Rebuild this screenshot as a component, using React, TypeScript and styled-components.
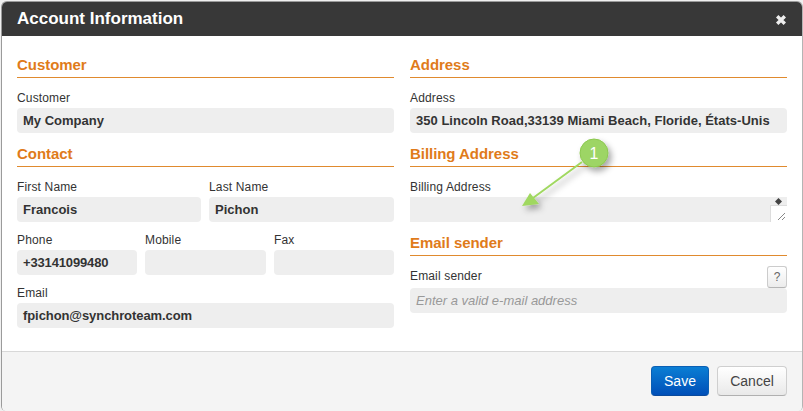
import React from 'react';
import styled, { createGlobalStyle } from 'styled-components';

const GlobalStyle = createGlobalStyle`
  html, body {
    margin: 0;
    padding: 0;
    background: #f0f0f0;
    overflow: hidden;
  }
  body {
    font-family: "Liberation Sans", Arial, sans-serif;
  }
`;

const Page = styled.div`
  position: relative;
  width: 803px;
  height: 411px;
  padding: 1px 0 0 1px;
  box-sizing: border-box;
`;

const Modal = styled.div`
  width: 802px;
  height: 410px;
  box-sizing: border-box;
  display: flex;
  flex-direction: column;
  background: #fff;
  border: 1px solid #9b9b9b;
  border-right-color: #b4b4b4;
  border-bottom: none;
  border-radius: 6px 6px 5px 5px;
  overflow: hidden;
`;

const Header = styled.div`
  height: 34px;
  flex: none;
  display: flex;
  align-items: center;
  justify-content: space-between;
  padding: 0 15px;
  background: #383838;
`;

const Heading = styled.div`
  font-size: 17px;
  font-weight: 700;
  color: #fff;
`;

const CloseIcon = styled.svg`
  width: 12px;
  height: 12px;
  margin-top: 1px;
`;

const Body = styled.div`
  flex: 1;
  display: grid;
  grid-template-columns: 377px 377px;
  column-gap: 16px;
  padding: 19px 15px 0;
  align-content: start;
`;

const Column = styled.div`
  display: flex;
  flex-direction: column;
`;

const SectionTitle = styled.div<{ $first?: boolean }>`
  margin-top: ${p => (p.$first ? 0 : 11)}px;
  height: 22px;
  line-height: 20px;
  font-size: 15px;
  letter-spacing: -0.05px;
  font-weight: 700;
  color: #e07b1a;
  border-bottom: 1px solid #e08a2e;
`;

const Field = styled.div<{ $gap?: number }>`
  display: flex;
  flex-direction: column;
  min-width: 0;
  margin-top: ${p => p.$gap ?? 0}px;
`;

const Row = styled.div<{ $cols: string; $gap: number }>`
  display: grid;
  grid-template-columns: ${p => p.$cols};
  column-gap: 8px;
  margin-top: ${p => p.$gap}px;
`;

const Label = styled.label`
  display: block;
  height: 14px;
  line-height: 14px;
  margin-bottom: 3px;
  font-size: 12px;
  letter-spacing: 0.15px;
  color: #333;
`;

const Value = styled.div<{ $placeholder?: boolean; $spacing?: number }>`
  height: 25px;
  line-height: 25px;
  padding: 0 6px;
  background: #eee;
  border-radius: 4px;
  font-size: 13px;
  font-weight: ${p => (p.$placeholder ? 400 : 700)};
  font-style: ${p => (p.$placeholder ? 'italic' : 'normal')};
  letter-spacing: ${p => p.$spacing ?? 0}px;
  color: ${p => (p.$placeholder ? '#999' : '#333')};
  white-space: nowrap;
  overflow: hidden;
`;

const TextArea = styled.div`
  position: relative;
  height: 25px;
  background: #eee;
`;

const SpinGlyph = styled.svg`
  position: absolute;
  right: 5px;
  top: 1px;
  width: 7px;
  height: 7px;
`;

const ResizeBox = styled.div`
  position: absolute;
  right: 0;
  bottom: 0;
  width: 16px;
  height: 16px;
  background: #fff;
  border-left: 1px solid #ddd;
  border-top: 1px solid #ddd;
`;

const Grip = styled.svg`
  position: absolute;
  right: 1px;
  bottom: 1px;
  width: 9px;
  height: 9px;
`;

const SenderRow = styled.div`
  display: flex;
  align-items: center;
  justify-content: space-between;
  height: 22px;
  margin-top: 10px;

  label {
    margin: 0 0 2px;
  }
`;

const HelpButton = styled.button`
  width: 20px;
  height: 22px;
  padding: 0;
  font-family: inherit;
  font-size: 12px;
  color: #666;
  background: linear-gradient(#fff, #ececec);
  border: 1px solid #ccc;
  border-bottom-color: #b5b5b5;
  border-radius: 3px;
`;

const Footer = styled.div`
  height: 60px;
  flex: none;
  box-sizing: border-box;
  display: flex;
  justify-content: flex-end;
  gap: 8px;
  padding: 14px 15px 0;
  background: #f4f4f4;
  border-top: 1px solid #d8d8d8;
`;

const Button = styled.button<{ $primary?: boolean }>`
  height: 30px;
  padding: 0;
  width: ${p => (p.$primary ? 58 : 70)}px;
  font-family: inherit;
  font-size: 14px;
  border-radius: 4px;
  color: ${p => (p.$primary ? '#fff' : '#444')};
  background: ${p =>
    p.$primary ? 'linear-gradient(#0a7ed4, #004fb8)' : 'linear-gradient(#fff, #e9e9e9)'};
  border: 1px solid ${p => (p.$primary ? '#0a5fb4' : '#cfcfcf')};
  border-bottom-color: ${p => (p.$primary ? '#0a4a9c' : '#b0b0b0')};
`;

const Annotation = styled.svg`
  position: absolute;
  left: 0;
  top: 0;
  width: 803px;
  height: 411px;
  pointer-events: none;
`;

export default function App() {
  return (
    <Page>
      <GlobalStyle />
      <Modal>
        <Header>
          <Heading>Account Information</Heading>
          <CloseIcon viewBox="0 0 12 12">
            <path d="M2.2 2.2 L9.8 9.8 M9.8 2.2 L2.2 9.8" stroke="#eee" strokeWidth="3.4" />
          </CloseIcon>
        </Header>
        <Body>
          <Column>
            <SectionTitle $first>Customer</SectionTitle>
            <Field $gap={13}>
              <Label>Customer</Label>
              <Value>My Company</Value>
            </Field>

            <SectionTitle>Contact</SectionTitle>
            <Row $cols="184px 185px" $gap={13}>
              <Field>
                <Label>First Name</Label>
                <Value>Francois</Value>
              </Field>
              <Field>
                <Label>Last Name</Label>
                <Value>Pichon</Value>
              </Field>
            </Row>
            <Row $cols="120px 121px 120px" $gap={11}>
              <Field>
                <Label>Phone</Label>
                <Value $spacing={-0.15}>+33141099480</Value>
              </Field>
              <Field>
                <Label>Mobile</Label>
                <Value />
              </Field>
              <Field>
                <Label>Fax</Label>
                <Value />
              </Field>
            </Row>
            <Field $gap={11}>
              <Label>Email</Label>
              <Value $spacing={-0.08}>fpichon@synchroteam.com</Value>
            </Field>
          </Column>

          <Column>
            <SectionTitle $first>Address</SectionTitle>
            <Field $gap={13}>
              <Label>Address</Label>
              <Value $spacing={0.02}>350 Lincoln Road,33139 Miami Beach, Floride, États-Unis</Value>
            </Field>

            <SectionTitle>Billing Address</SectionTitle>
            <Field $gap={13}>
              <Label>Billing Address</Label>
              <TextArea>
                <SpinGlyph viewBox="0 0 7 7">
                  <path d="M3.5 0 L7 3.5 L3.5 7 L0 3.5 Z" fill="#444" />
                </SpinGlyph>
                <ResizeBox>
                  <Grip viewBox="0 0 9 9">
                    <path d="M1 8 L8 1 M5 8 L8 5" stroke="#888" strokeWidth="1" />
                  </Grip>
                </ResizeBox>
              </TextArea>
            </Field>

            <SectionTitle>Email sender</SectionTitle>
            <SenderRow>
              <Label>Email sender</Label>
              <HelpButton>?</HelpButton>
            </SenderRow>
            <Value $placeholder>Enter a valid e-mail address</Value>
          </Column>
        </Body>
        <Footer>
          <Button $primary>Save</Button>
          <Button>Cancel</Button>
        </Footer>
      </Modal>

      <Annotation viewBox="0 0 803 411">
        <defs>
          <filter id="shade" x="-30%" y="-30%" width="180%" height="180%">
            <feDropShadow dx="3" dy="4" stdDeviation="3" floodColor="#000" floodOpacity="0.35" />
          </filter>
        </defs>
        <g filter="url(#shade)">
          <path d="M582 162 L533 198" stroke="#a0d860" strokeWidth="2" />
          <path d="M522 206 L530 193 L539 204 Z" fill="#a0d860" />
          <circle cx="594" cy="153" r="14" fill="#9dd565" stroke="#8cc850" strokeWidth="1" />
        </g>
        <text x="594" y="159" textAnchor="middle" fontSize="16" fill="#fff" fontFamily="Liberation Sans">
          1
        </text>
      </Annotation>
    </Page>
  );
}
